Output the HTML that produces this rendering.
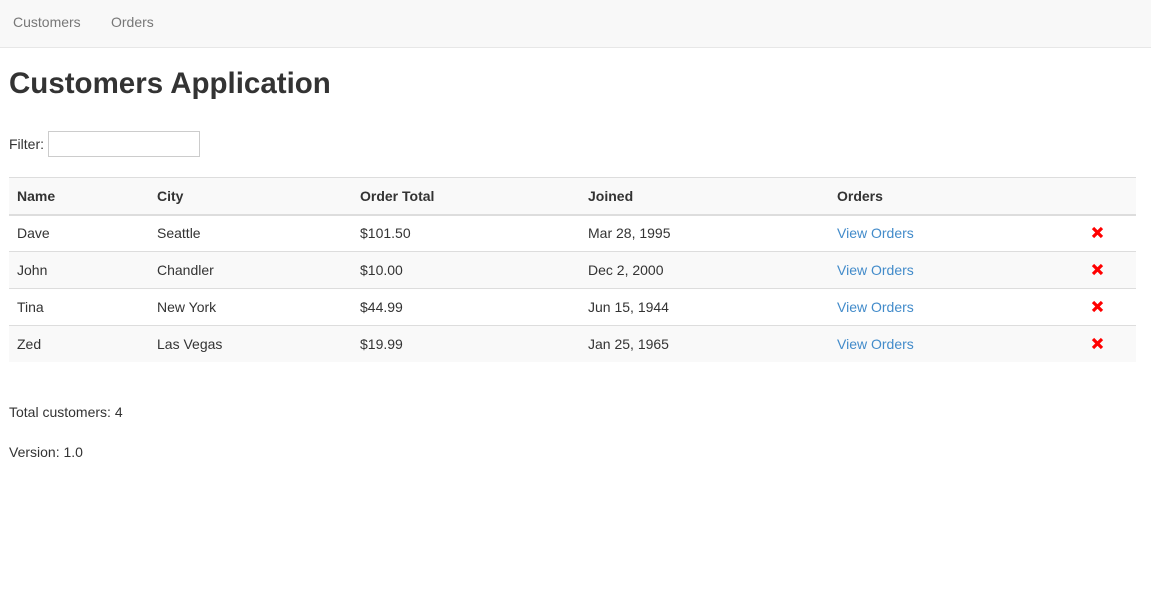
<!DOCTYPE html>
<html><head><meta charset="utf-8"><style>
*{margin:0;padding:0;box-sizing:border-box}
body{width:1151px;height:614px;background:#fff;font-family:"Liberation Sans",sans-serif;font-size:14px;color:#333;position:relative;overflow:hidden}
.nav{position:absolute;left:0;top:0;width:1151px;height:48px;background:#f8f8f8;border-bottom:1px solid #e7e7e7}
.nav span{position:absolute;top:14px;color:#777;font-size:14px}
h1{position:absolute;left:9px;top:67px;font-size:29.5px;font-weight:bold;color:#333;white-space:nowrap}
.t{position:absolute;white-space:nowrap}
.row{position:absolute;left:9px;width:1127px;height:37px;border-top:1px solid #ddd}
.g{background:#f9f9f9}
.c{position:absolute;top:10px}
.b{font-weight:bold}
a{color:#428bca;text-decoration:none}
.x{position:absolute;top:11px;left:1082px}
</style></head><body>
<div class="nav"><span style="left:13px">Customers</span><span style="left:111px">Orders</span></div>
<h1>Customers Application</h1>
<div class="t" style="left:9px;top:136px">Filter:</div>
<div style="position:absolute;left:48px;top:131px;width:152px;height:26px;border:1px solid #ccc"></div>

<div class="row g" style="top:177px;height:38px"><span class="c b" style="left:8px">Name</span><span class="c b" style="left:148px">City</span><span class="c b" style="left:351px">Order Total</span><span class="c b" style="left:579px">Joined</span><span class="c b" style="left:828px">Orders</span></div>

<div class="row" style="top:214px;border-top:2px solid #ddd"><span class="c" style="left:8px;top:9px">Dave</span><span class="c" style="left:148px;top:9px">Seattle</span><span class="c" style="left:351px;top:9px">$101.50</span><span class="c" style="left:579px;top:9px">Mar 28, 1995</span><a class="c" style="left:828px;top:9px">View Orders</a><svg class="x" style="top:10px" width="13" height="13" viewBox="0 0 13 13"><path d="M2 2L11 11M11 2L2 11" stroke="#f00" stroke-width="3.2"/></svg></div>
<div class="row g" style="top:251px"><span class="c" style="left:8px">John</span><span class="c" style="left:148px">Chandler</span><span class="c" style="left:351px">$10.00</span><span class="c" style="left:579px">Dec 2, 2000</span><a class="c" style="left:828px">View Orders</a><svg class="x" width="13" height="13" viewBox="0 0 13 13"><path d="M2 2L11 11M11 2L2 11" stroke="#f00" stroke-width="3.2"/></svg></div>
<div class="row" style="top:288px"><span class="c" style="left:8px">Tina</span><span class="c" style="left:148px">New York</span><span class="c" style="left:351px">$44.99</span><span class="c" style="left:579px">Jun 15, 1944</span><a class="c" style="left:828px">View Orders</a><svg class="x" width="13" height="13" viewBox="0 0 13 13"><path d="M2 2L11 11M11 2L2 11" stroke="#f00" stroke-width="3.2"/></svg></div>
<div class="row g" style="top:325px"><span class="c" style="left:8px">Zed</span><span class="c" style="left:148px">Las Vegas</span><span class="c" style="left:351px">$19.99</span><span class="c" style="left:579px">Jan 25, 1965</span><a class="c" style="left:828px">View Orders</a><svg class="x" width="13" height="13" viewBox="0 0 13 13"><path d="M2 2L11 11M11 2L2 11" stroke="#f00" stroke-width="3.2"/></svg></div>

<div class="t" style="left:9px;top:404px">Total customers: 4</div>
<div class="t" style="left:9px;top:444px">Version: 1.0</div>
</body></html>
